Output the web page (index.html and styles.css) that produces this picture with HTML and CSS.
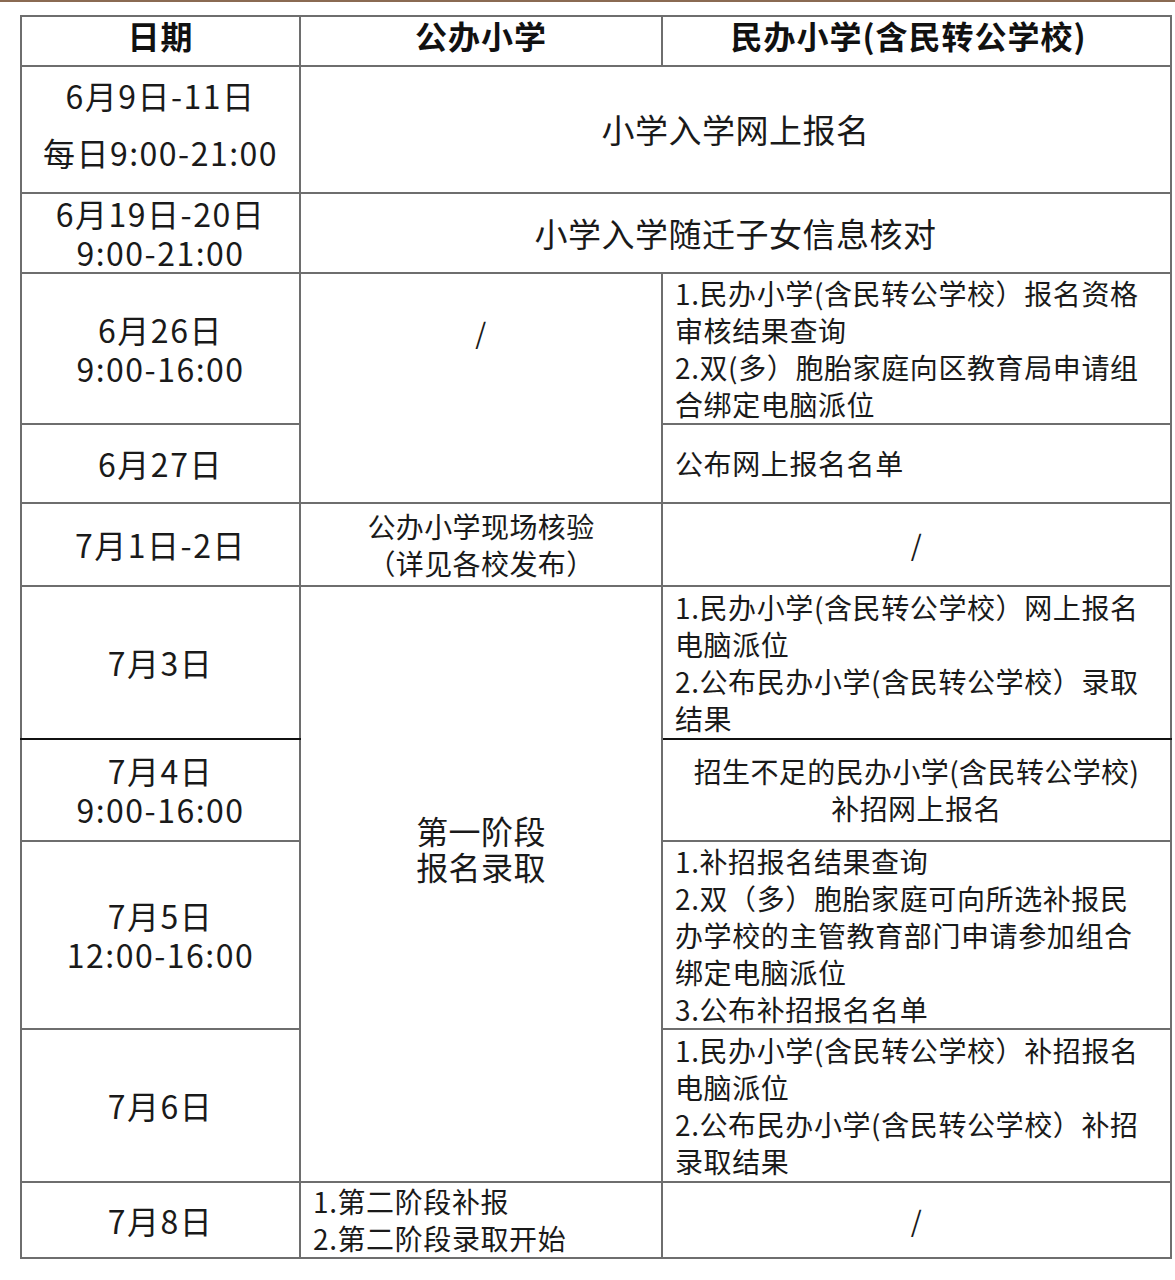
FILE: index.html
```html
<!DOCTYPE html>
<html lang="zh-CN">
<head>
<meta charset="utf-8">
<title>小学入学时间安排</title>
<link rel="stylesheet" href="styles.css">
</head>
<body>
<div class="topline"></div>
<div class="wrap">
<table class="sched">
  <colgroup>
    <col class="c1"><col class="c2"><col class="c3">
  </colgroup>
  <thead>
    <tr class="h-head">
      <th>日期</th>
      <th>公办小学</th>
      <th class="h-right">民办小学(含民转公学校)</th>
    </tr>
  </thead>
  <tbody>
    <tr class="h1">
      <td class="date first"><div class="p1">6月9日-11日</div><div>每日9:00-21:00</div></td>
      <td class="big" colspan="2">小学入学网上报名</td>
    </tr>
    <tr class="h2">
      <td class="date">6月19日-20日<br>9:00-21:00</td>
      <td class="big" colspan="2">小学入学随迁子女信息核对</td>
    </tr>
    <tr class="h3">
      <td class="date">6月26日<br>9:00-16:00</td>
      <td class="mid top slash1" rowspan="2">/</td>
      <td class="txt">1.民办小学(含民转公学校）报名资格<br>审核结果查询<br>2.双(多）胞胎家庭向区教育局申请组<br>合绑定电脑派位</td>
    </tr>
    <tr class="h4">
      <td class="date">6月27日</td>
      <td class="txt">公布网上报名名单</td>
    </tr>
    <tr class="h5">
      <td class="date">7月1日-2日</td>
      <td class="mid">公办小学现场核验<br>（详见各校发布）</td>
      <td class="mid">/</td>
    </tr>
    <tr class="h6">
      <td class="date dark-b">7月3日</td>
      <td class="mid top stage" rowspan="4">第一阶段<br>报名录取</td>
      <td class="txt dark-b">1.民办小学(含民转公学校）网上报名<br>电脑派位<br>2.公布民办小学(含民转公学校）录取<br>结果</td>
    </tr>
    <tr class="h7">
      <td class="date">7月4日<br>9:00-16:00</td>
      <td class="mid">招生不足的民办小学(含民转公学校)<br>补招网上报名</td>
    </tr>
    <tr class="h8">
      <td class="date">7月5日<br>12:00-16:00</td>
      <td class="txt">1.补招报名结果查询<br>2.双（多）胞胎家庭可向所选补报民<br>办学校的主管教育部门申请参加组合<br>绑定电脑派位<br>3.公布补招报名名单</td>
    </tr>
    <tr class="h9">
      <td class="date">7月6日</td>
      <td class="txt">1.民办小学(含民转公学校）补招报名<br>电脑派位<br>2.公布民办小学(含民转公学校）补招<br>录取结果</td>
    </tr>
    <tr class="h10">
      <td class="date">7月8日</td>
      <td class="txt">1.第二阶段补报<br>2.第二阶段录取开始</td>
      <td class="mid">/</td>
    </tr>
  </tbody>
</table>
</div>
</body>
</html>
```
FILE: styles.css
```css
html, body {
  margin: 0;
  padding: 0;
  background: #ffffff;
}
body {
  font-family: "Noto Sans CJK SC", "Noto Sans", sans-serif;
  color: #1a1a1a;
  width: 1175px;
  height: 1280px;
  overflow: hidden;
}
.topline {
  height: 2px;
  background: #8a6a52;
}
.wrap {
  padding: 13px 0 0 20px;
}
.sched {
  border-collapse: collapse;
  table-layout: fixed;
  width: 1150px;
}
.c1 { width: 279px; }
.c2 { width: 362px; }
.c3 { width: 509px; }

.sched th,
.sched td {
  border: 2px solid #6e6e6e;
  padding: 0;
  white-space: nowrap;
}
.sched th {
  font-size: 32px;
  font-weight: 700;
  letter-spacing: 1px;
  text-align: center;
  line-height: 30px;
  vertical-align: middle;
  padding-bottom: 12px;
  color: #111;
}
.sched th.h-right { padding-right: 16px; }
.h-head { height: 50px; }
.h1 { height: 127px; }
.h2 { height: 80px; }
.h3 { height: 151px; }
.h4 { height: 79px; }
.h5 { height: 83px; }
.h6 { height: 153px; }
.h7 { height: 102px; }
.h8 { height: 188px; }
.h9 { height: 153px; }
.h10 { height: 76px; }

.date {
  font-size: 32px;
  line-height: 39px;
  text-align: center;
  vertical-align: middle;
  letter-spacing: 1.5px;
}
.sched td.first { padding-bottom: 12px; }
.date .p1 { margin-bottom: 18px; }
.big {
  font-size: 33px;
  line-height: 39px;
  letter-spacing: 0.5px;
  text-align: center;
  vertical-align: middle;
}
.txt {
  font-size: 28px;
  line-height: 37px;
  letter-spacing: 0.6px;
  text-align: left;
  vertical-align: middle;
}
.sched td.txt { padding-left: 12px; }
.mid {
  font-size: 28px;
  line-height: 37px;
  letter-spacing: 0.4px;
  text-align: center;
  vertical-align: middle;
}
.sched td.top { vertical-align: top; }
.sched td.slash1 { padding-top: 40px; }
.sched td.stage {
  font-size: 32px;
  line-height: 36px;
  padding-top: 225px;
}
.sched td.dark-b { border-bottom-color: #111; }
```
